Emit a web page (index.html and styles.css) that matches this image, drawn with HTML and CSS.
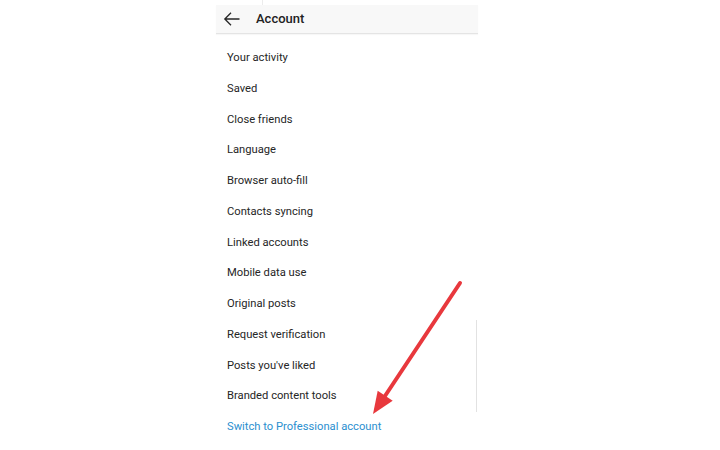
FILE: index.html
```html
<!DOCTYPE html>
<html lang="en">
<head>
  <meta charset="UTF-8">
  <title>Account</title>
  <link rel="stylesheet" href="styles.css">
</head>
<body>
<div class="screen">
  <div class="stub"></div>
  <div class="topbar">
    <svg class="back" width="18" height="18" viewBox="0 0 18 18">
      <path d="M16.5 9H1.8M8 2.8L1.8 9 8 15.2" fill="none" stroke="#262626" stroke-width="1.3"/>
    </svg>
    <span class="title">Account</span>
  </div>
  <ul class="menu">
    <li>Your activity</li>
    <li>Saved</li>
    <li>Close friends</li>
    <li>Language</li>
    <li>Browser auto-fill</li>
    <li>Contacts syncing</li>
    <li>Linked accounts</li>
    <li>Mobile data use</li>
    <li>Original posts</li>
    <li class="edge">
      <ul class="group">
        <li>Request verification</li>
        <li>Posts you've liked</li>
        <li>Branded content tools</li>
      </ul>
    </li>
    <li class="link">Switch to Professional account</li>
  </ul>
</div>

<!-- annotation arrow drawn over the screenshot -->
<svg class="pointer" width="720" height="450" viewBox="0 0 720 450">
  <line x1="460" y1="283" x2="383" y2="399" stroke="#e8383d" stroke-width="4" stroke-linecap="round"/>
  <polygon points="373,414 392.7,400.7 377.7,390.7" fill="#e8383d"/>
</svg>
</body>
</html>
```

FILE: styles.css
```css
body {
  margin: 0;
  background: #fff;
  font-family: Roboto, "Noto Sans", sans-serif;
  color: #262626;
}

.screen {
  width: 262px;
  margin-left: 216px;
}

.stub {
  height: 5px;
  margin-left: 46px;
  border-left: 1px solid #ececec;
}

.topbar {
  display: flex;
  align-items: center;
  height: 28px;
  background: #f8f8f8;
  border-bottom: 1px solid #e4e4e4;
  box-shadow: 0 1px 1px rgba(0, 0, 0, 0.03);
}

.back {
  margin-left: 7px;
  margin-right: 15px;
  margin-top: -1px;
}

.title {
  font-size: 13px;
  font-weight: 500;
  color: #222;
  margin-top: -2px;
}

.menu {
  list-style: none;
  margin: 0;
  padding: 9px 0 0 0;
}

.menu li {
  height: 30.75px;
  line-height: 30.75px;
  padding-left: 11px;
  font-size: 11.2px;
}

.menu li.edge {
  height: auto;
  padding-left: 0;
  border-right: 1px solid #e2e2e2;
  margin-right: 1px;
}

.group {
  list-style: none;
  margin: 0;
  padding: 0;
}

.link {
  color: #2b8fcf;
}

.pointer {
  position: absolute;
  left: 0;
  top: 0;
}
```
